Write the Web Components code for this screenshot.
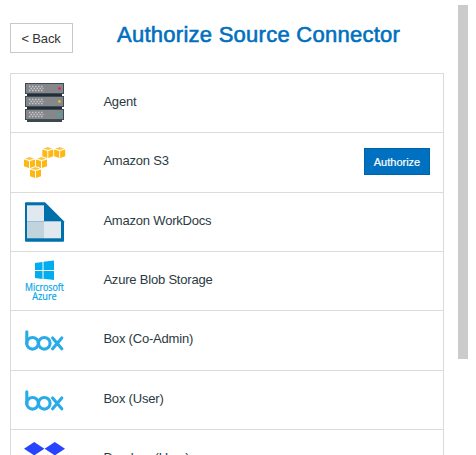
<!DOCTYPE html>
<html lang="en">
<head>
<meta charset="utf-8">
<title>Authorize Source Connector</title>
<style>
html,body{margin:0;height:100%;overflow:hidden;background:#fff}
body{font-family:"Liberation Sans",Arial,sans-serif}
</style>
</head>
<body>
<connector-dialog>
  <connector-header slot="header" heading="Authorize Source Connector"></connector-header>
  <connector-row icon="agent">Agent</connector-row>
  <connector-row icon="s3">Amazon S3<authorize-button slot="action">Authorize</authorize-button></connector-row>
  <connector-row icon="workdocs">Amazon WorkDocs</connector-row>
  <connector-row icon="azure">Azure Blob Storage</connector-row>
  <connector-row icon="box">Box (Co-Admin)</connector-row>
  <connector-row icon="box">Box (User)</connector-row>
  <connector-row icon="dropbox">Dropbox (User)</connector-row>
</connector-dialog>
<script>
const server = (y, led) => `
  <rect x="1" y="${y}" width="39" height="11" fill="#3d4b54"/>
  <rect x="2" y="${y + 1}" width="37" height="9" fill="#85878b"/>
  <path d="M5 ${y + 3.5}h14M5 ${y + 7.5}h14" stroke="#c6c8ca" stroke-width="1.4" stroke-dasharray="1.5 1.5"/>
  <path d="M6.5 ${y + 5.5}h13" stroke="#c6c8ca" stroke-width="1.4" stroke-dasharray="1.5 1.5"/>
  <path d="M34 ${y + 5.5}h3M35.5 ${y + 4}v3" stroke="${led}" stroke-width="1.3"/>`;
const cube = (x, y) => `
  <g transform="translate(${x} ${y})">
    <path d="M0 2.6 5 4v7L0 9.2zM6 4l5-1.4v6.6L6 11z" fill="#fdb813"/>
    <path d="M.8 1.7 5.5 0l4.7 1.7L5.5 3.1z" fill="#fbc647"/>
  </g>`;
const icons = {
  agent: `<path d="M3 11h35v18H3z" fill="#222e37"/><path d="M3 38h35v2H3z" fill="#3b4850"/>
    ${server(1, '#e0285f')}${server(14, '#e8b72f')}${server(27, '#28b8a8')}`,
  s3: cube(18.3, 6) + cube(30.2, 6) + cube(0, 16) + cube(12, 16) + cube(6, 26),
  workdocs: `<path d="M2 1.3h19l19 19v19.4q0 1-1 1H2q-1 0-1-1V2.3q0-1 1-1z" fill="#0070aa"/>
    <path d="M3 4.3h17v16H3z" fill="#e1e8ef"/><path d="M3 20.3h17v17H3z" fill="#c1d3dd"/><path d="M20 20.3h17v17H20z" fill="#e1e8ef"/>`,
  azure: `<path d="M11 3 18.5 2v8H11zM19.5 1.8 30 .5V10H19.5zM11 11h7.5v8L11 18zM19.5 11H30v9l-10.5-1.2z" fill="#00adef"/>
    <text x="20.5" y="30.6" text-anchor="middle" textLength="39" lengthAdjust="spacingAndGlyphs">Microsoft</text><text x="20.5" y="40" text-anchor="middle" textLength="24.5" lengthAdjust="spacingAndGlyphs">Azure</text>`,
  box: `<g fill="none" stroke="#29abe8" stroke-width="3.1" stroke-linecap="round"><path d="M2.8 12.7v12"/><circle cx="8.5" cy="24.3" r="5.8"/><circle cx="20.3" cy="24.3" r="5.8"/><path d="m28.6 19 9.2 10.8M37.8 19l-9.2 10.8"/></g>`,
  dropbox: `<path d="m0 10.7 10.2-6.7 10.2 6.7-10.2 6.7zM20.6 10.7 30.8 4 41 10.7l-10.2 6.7z" fill="#2944ff"/>`
};

function define(name, html, setup) {
  const template = document.createElement('template');
  template.innerHTML = html;
  customElements.define(name, class extends HTMLElement {
    constructor() {
      super();
      this.attachShadow({mode: 'open'}).append(template.content.cloneNode(true));
    }
    connectedCallback() { if (setup) setup(this, this.shadowRoot); }
  });
}

define('connector-dialog', `<style>
  :host{display:flex;align-items:flex-start;height:455px;overflow:hidden;background:#fff}
  main{width:434px;margin-left:10px;flex:none}
  section{display:grid;grid-auto-rows:59.333px;border:solid #dadbdd;border-width:0 1px}
  </style><main><slot name="header"></slot><section><slot></slot></section></main><connector-scrollbar></connector-scrollbar>`);

define('connector-scrollbar', `<style>
  :host{display:block;width:10px;height:354px;margin:5px 0 0 14px;background:#cbcbcb}</style>`);

define('connector-header', `<style>
  :host{display:flex;height:73px;box-sizing:border-box;padding-top:22px;align-items:flex-start}
  button{box-sizing:border-box;width:63px;height:30px;margin-top:1px;border:1px solid #c8c8c8;background:#fff;color:#333;font:13px "Liberation Sans",Arial,sans-serif;padding:0 1px 0 0;white-space:nowrap;letter-spacing:-.15px}
  h1{margin:0 0 0 44px;font-size:22px;line-height:26px;font-weight:400;letter-spacing:.26px;color:#0070bf;-webkit-text-stroke:.6px #0070bf;white-space:nowrap}
  </style><button>&lt; Back</button><h1></h1>`,
  (host, root) => { root.querySelector('h1').textContent = host.getAttribute('heading'); });

define('connector-row', `<style>
  :host{display:flex;box-sizing:border-box;border-top:1px solid #dadbdd;padding:8px 13px 0;color:#2b3a42;font-size:13px;line-height:16px}
  svg{width:42px;height:42px;flex:none}
  svg text{font:400 10.3px "Open Sans","Noto Sans",sans-serif;fill:#00a5e8;stroke:#00a5e8;stroke-width:.2px}
  span{margin:12px 0 0 37.4px;flex:1;white-space:nowrap;letter-spacing:-.2px}
  </style><svg viewBox="0 0 42 42"></svg><span><slot></slot></span><slot name="action"></slot>`,
  (host, root) => { root.querySelector('svg').innerHTML = icons[host.getAttribute('icon')]; });

define('authorize-button', `<style>
  :host{display:block;margin-top:7px}
  button{display:block;box-sizing:border-box;width:66px;height:27px;border:1px solid #0062a9;background:#0070c0;color:#fff;font:11px "Liberation Sans",Arial,sans-serif;padding:0;-webkit-text-stroke:.2px #fff}
  </style><button><slot></slot></button>`);
</script>
</body>
</html>
